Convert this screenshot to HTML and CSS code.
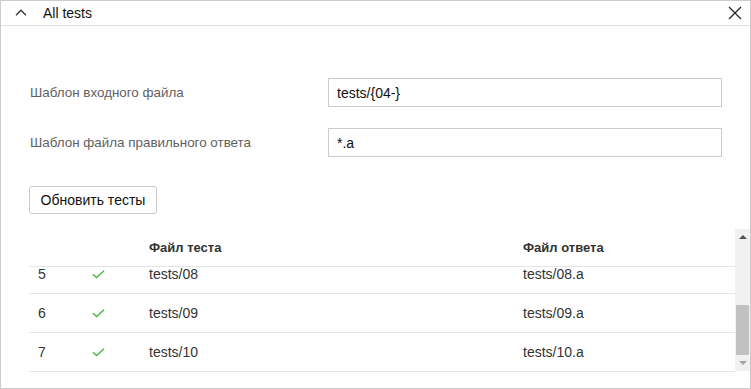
FILE: index.html
```html
<!DOCTYPE html>
<html lang="ru">
  <head>
    <meta charset="UTF-8" />
    <title>All tests</title>
    <link rel="stylesheet" href="styles.css">
  </head>
  <body>
    <div class="panel">
      <div class="panelHead">
        <svg class="caret" width="12" height="7" viewBox="0 0 12 7">
          <path d="M1 6.2 L6 1.2 L11 6.2" fill="none" stroke="#333" stroke-width="1.3" />
        </svg>
        <span class="panelTitle">All tests</span>
        <svg class="closeIcon" width="14" height="14" viewBox="0 0 14 14">
          <path d="M1 1 L13 13 M13 1 L1 13" fill="none" stroke="#222" stroke-width="1.3" />
        </svg>
      </div>

      <div class="form">
        <label class="formLabel">Шаблон входного файла</label>
        <input class="formInput" type="text" value="tests/{04-}" />
        <label class="formLabel">Шаблон файла правильного ответа</label>
        <input class="formInput" type="text" value="*.a" />
      </div>

      <button class="btn">Обновить тесты</button>

      <div class="tests">
        <div class="testsTable">
          <div class="testsRow testsHead">
            <span></span>
            <span></span>
            <span>Файл теста</span>
            <span>Файл ответа</span>
          </div>
          <div class="testsBody">
            <div class="testsList">
              <div class="testsRow">
                <span>5</span>
                <span><svg class="check" width="13" height="9" viewBox="0 0 13 9"><path d="M1 4.2 L4.6 7.6 L12 0.8" fill="none" stroke="#44b844" stroke-width="1.4" /></svg></span>
                <span>tests/08</span>
                <span>tests/08.a</span>
              </div>
              <div class="testsRow">
                <span>6</span>
                <span><svg class="check" width="13" height="9" viewBox="0 0 13 9"><path d="M1 4.2 L4.6 7.6 L12 0.8" fill="none" stroke="#44b844" stroke-width="1.4" /></svg></span>
                <span>tests/09</span>
                <span>tests/09.a</span>
              </div>
              <div class="testsRow">
                <span>7</span>
                <span><svg class="check" width="13" height="9" viewBox="0 0 13 9"><path d="M1 4.2 L4.6 7.6 L12 0.8" fill="none" stroke="#44b844" stroke-width="1.4" /></svg></span>
                <span>tests/10</span>
                <span>tests/10.a</span>
              </div>
            </div>
          </div>
        </div>
        <div class="scrollbar">
          <span class="arrowUp"></span>
          <span class="thumb"></span>
          <span class="arrowDown"></span>
        </div>
      </div>
    </div>
  </body>
</html>
```

FILE: styles.css
```css
* {
  box-sizing: border-box;
}

body {
  margin: 0;
  background: #fff;
  font-family: 'Liberation Sans', Arial, sans-serif;
  color: #333;
}

.panel {
  width: 751px;
  height: 389px;
  border: 1px solid #ccc;
  background: #fff;
}

.panelHead {
  display: flex;
  align-items: center;
  height: 25px;
  border-bottom: 1px solid #ddd;
  padding: 0 8px 0 14px;
}

.caret {
  margin-top: -1px;
}

.panelTitle {
  margin-left: 16px;
  font-size: 14px;
  color: #111;
  flex: 1;
}

.closeIcon {
  margin-top: -1px;
}

.form {
  display: grid;
  grid-template-columns: 299px 394px;
  row-gap: 21px;
  align-items: center;
  padding: 52px 28px 0 28px;
}

.formLabel {
  padding-left: 1px;
  font-size: 13.4px;
  color: #5f5f5f;
}

.formInput {
  height: 29px;
  padding: 0 8px;
  border: 1px solid #ccc;
  border-radius: 0;
  font-family: 'Liberation Sans', Arial, sans-serif;
  font-size: 14px;
  color: #111;
  outline: none;
}

.btn {
  display: block;
  margin: 29px 0 0 28px;
  height: 28px;
  width: 128px;
  padding: 0;
  border: 1px solid #ccc;
  border-radius: 3px;
  background: #fff;
  font-family: 'Liberation Sans', Arial, sans-serif;
  font-size: 14px;
  color: #111;
}

.tests {
  display: flex;
  margin: 15px 0 0 28px;
  height: 143px;
}

.testsTable {
  flex: 1;
}

.testsRow {
  display: grid;
  grid-template-columns: 63px 57px 374px 1fr;
  align-items: center;
  height: 39px;
  border-bottom: 1px solid #e5e5e5;
  font-size: 14px;
  color: #333;
}

.testsRow span:first-child {
  padding-left: 9px;
}

.testsHead {
  height: 38px;
  font-size: 13px;
  font-weight: bold;
  color: #333;
}

.testsBody {
  height: 105px;
  overflow: hidden;
}

.testsList {
  margin-top: -12px;
}

.check {
  display: block;
  margin-top: 1px;
}

.scrollbar {
  display: flex;
  flex-direction: column;
  align-items: center;
  width: 15px;
  height: 142px;
  background: #f1f1f1;
}

.arrowUp {
  margin-top: 6px;
  border-left: 4px solid transparent;
  border-right: 4px solid transparent;
  border-bottom: 4px solid #505050;
}

.thumb {
  margin-top: 66px;
  width: 13px;
  height: 50px;
  background: #c1c1c1;
}

.arrowDown {
  margin-top: 6px;
  border-left: 4px solid transparent;
  border-right: 4px solid transparent;
  border-top: 4px solid #a3a3a3;
}
```
